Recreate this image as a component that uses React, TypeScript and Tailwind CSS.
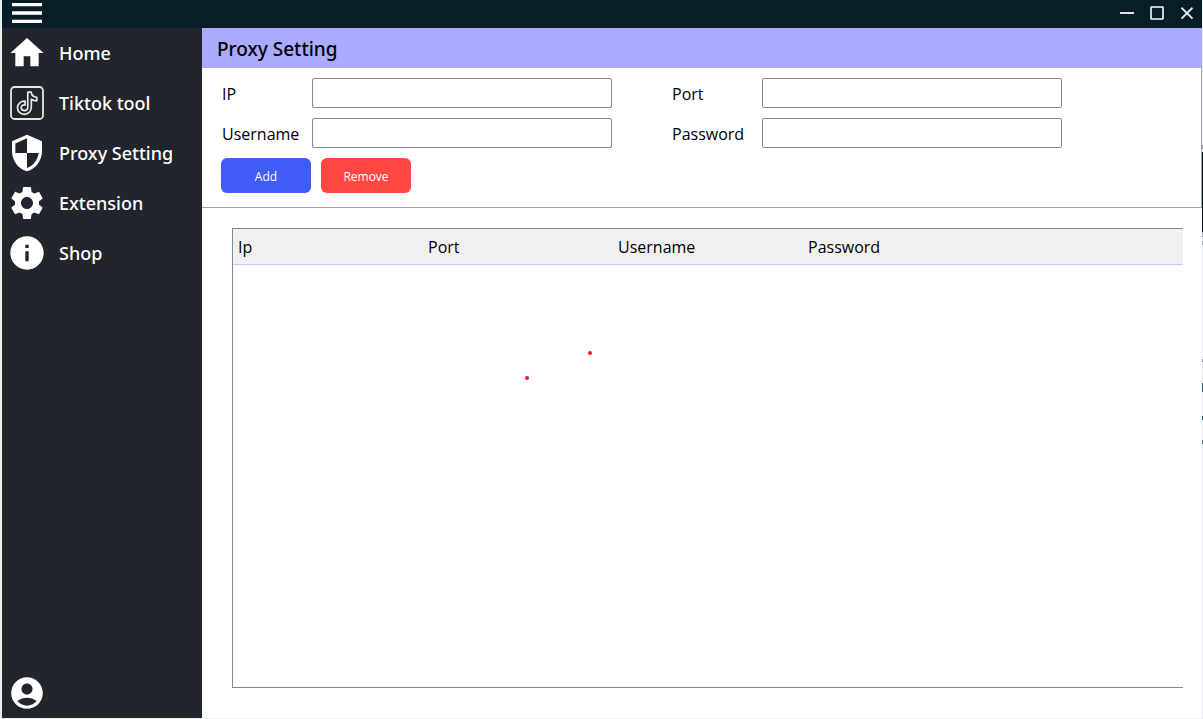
import React, { useState } from "react";
import {
  MdAccountCircle,
  MdHome,
  MdInfo,
  MdMenu,
  MdSecurity,
  MdSettings,
} from "react-icons/md";

const TiktokIcon: React.FC<{ className?: string }> = ({ className }) => (
  <svg viewBox="0 0 40 40" fill="none" stroke="#e6e7e8" className={className}>
    <rect x="4" y="4" width="32" height="32" rx="3.5" strokeWidth="1.8" />
    <path
      d="M20.8 9.2h3.4c.3 2.7 2.2 4.8 5.6 5.1v3.5c-2.1.1-4-.5-5.5-1.6v8.1c0 4.2-3.2 7-7 7-3.9 0-6.8-2.9-6.8-6.6 0-4 3.4-6.9 7.6-6.5v3.7c-2.2-.4-3.9.8-3.9 2.7 0 1.8 1.4 3 3.1 3 2 0 3.5-1.4 3.5-3.6z"
      strokeWidth="1.7"
      strokeLinejoin="round"
    />
  </svg>
);

const menu = [
  { label: "Home", icon: MdHome },
  { label: "Tiktok tool", icon: TiktokIcon },
  { label: "Proxy Setting", icon: MdSecurity },
  { label: "Extension", icon: MdSettings },
  { label: "Shop", icon: MdInfo },
];

const columns = ["Ip", "Port", "Username", "Password"];

interface FieldProps {
  id: string;
  label: string;
  type?: string;
}

const Field: React.FC<FieldProps> = ({ id, label, type = "text" }) => (
  <div className="flex h-[30px] items-center">
    <label htmlFor={id} className="w-[90px] shrink-0 pt-0.5">
      {label}
    </label>
    <input
      id={id}
      type={type}
      className="h-[30px] w-full max-w-[300px] rounded-xs border border-[#858585] bg-white px-2 outline-none"
    />
  </div>
);

const TitleBar: React.FC<{ onToggle: () => void }> = ({ onToggle }) => (
  <header className="flex h-7 shrink-0 items-center justify-between bg-[#071e26] text-white">
    <button
      aria-label="Menu"
      onClick={onToggle}
      className="ml-[5px] flex h-7 items-center overflow-hidden pb-0.5"
    >
      <MdMenu className="size-10 shrink-0" />
    </button>
    <div className="flex pb-0.5">
      <button aria-label="Minimize" className="flex w-[30px] justify-center">
        <svg viewBox="0 0 16 16" className="size-4 fill-[#dfe3e4]">
          <rect x="1" y="7" width="14" height="2" />
        </svg>
      </button>
      <button aria-label="Maximize" className="flex w-[30px] justify-center">
        <svg viewBox="0 0 16 16" fill="none" stroke="white" className="size-4">
          <rect x="2" y="2" width="12" height="12" rx=".5" strokeWidth="1.6" />
        </svg>
      </button>
      <button aria-label="Close" className="flex w-[30px] justify-center">
        <svg viewBox="0 0 16 16" stroke="#e6eaeb" className="size-4">
          <path d="M2.5 2.8 13.5 13.6M13.5 2.8 2.5 13.6" strokeWidth="1.9" />
        </svg>
      </button>
    </div>
  </header>
);

const Sidebar: React.FC<{ collapsed: boolean }> = ({ collapsed }) => (
  <nav
    className={`flex shrink-0 flex-col bg-[#22252c] text-white ${collapsed ? "w-[50px]" : "w-[200px]"}`}
  >
    {menu.map(({ label, icon: Icon }) => (
      <button key={label} className="flex h-[50px] items-center gap-3 pl-[5px]">
        <Icon className="size-10 shrink-0" />
        {!collapsed && (
          <span className="font-['Noto_Sans',sans-serif] text-lg font-medium">
            {label}
          </span>
        )}
      </button>
    ))}
    <button
      aria-label="Account"
      className="mt-auto flex h-[50px] items-center pl-1.5"
    >
      <MdAccountCircle className="size-[38px]" />
    </button>
  </nav>
);

// strip of the desktop showing past the window's right edge
const DesktopEdge = () => (
  <svg viewBox="0 0 1 719" preserveAspectRatio="none" className="h-full w-px bg-[#e8f0f3]">
    <rect y="145" width="1" height="4" fill="#8d959b" />
    <rect y="152" width="1" height="80" fill="#041219" />
    <rect y="232" width="1" height="5" fill="#8aa3b0" />
    <rect y="241" width="1" height="4" fill="#9aabb4" />
    <rect y="359" width="1" height="3" fill="#8c979c" />
    <rect y="383" width="1" height="9" fill="#24505c" />
    <rect y="416" width="1" height="4" fill="#3b5f6a" />
    <rect y="440" width="1" height="4" fill="#5d7780" />
  </svg>
);

export default function App() {
  const [collapsed, setCollapsed] = useState(false);

  return (
    <div className="flex h-screen bg-white font-['Open_Sans','Noto_Sans',sans-serif] text-base text-black">
      <div className="flex min-w-0 flex-1 flex-col border-b border-l-2 border-[#e8eff1]">
        <TitleBar onToggle={() => setCollapsed(!collapsed)} />
        <div className="flex min-h-0 flex-1">
          <Sidebar collapsed={collapsed} />
          <main className="flex min-w-0 flex-1 flex-col">
            <h1 className="flex h-10 shrink-0 items-center bg-[#aaaaff] px-[15px] pt-0.5 font-['Noto_Sans',sans-serif] text-[19px] font-medium">
              Proxy Setting
            </h1>
            <form
              onSubmit={(e) => e.preventDefault()}
              className="border-r border-b border-[#a5a5a5] px-5 pt-2.5 pb-3.5"
            >
              <div className="grid max-w-[840px] grid-cols-[1fr_390px] gap-x-[60px] gap-y-2.5">
                <Field id="ip" label="IP" />
                <Field id="port" label="Port" />
                <Field id="username" label="Username" />
                <Field id="password" label="Password" type="password" />
              </div>
              <div className="-ml-px mt-2.5 flex gap-2.5 text-xs text-white">
                <button className="h-[35px] w-[90px] rounded-md bg-[#415cf7] pt-0.5">
                  Add
                </button>
                <button className="h-[35px] w-[90px] rounded-md bg-[#ff4842] pt-0.5">
                  Remove
                </button>
              </div>
            </form>
            <section className="relative mt-5 mr-[19px] mb-[30px] ml-[30px] flex-1 border-y border-l border-[#828790]">
              <table className="w-full table-fixed border-separate border-spacing-0 text-left">
                <thead>
                  <tr className="bg-[#f0f0f0]">
                    {columns.map((name) => (
                      <th
                        key={name}
                        className="h-9 w-1/5 border-b border-[#ccc6ff] px-[5px] font-normal"
                      >
                        {name}
                      </th>
                    ))}
                    <td className="border-b border-[#ccc6ff]" />
                  </tr>
                </thead>
                <tbody />
              </table>
              <span className="absolute top-[122px] left-[355px] size-1 rounded-full bg-[#ed1c24]" />
              <span className="absolute top-[147px] left-[292px] size-1 rounded-full bg-[#ed1c24]" />
            </section>
          </main>
        </div>
      </div>
      <DesktopEdge />
    </div>
  );
}
